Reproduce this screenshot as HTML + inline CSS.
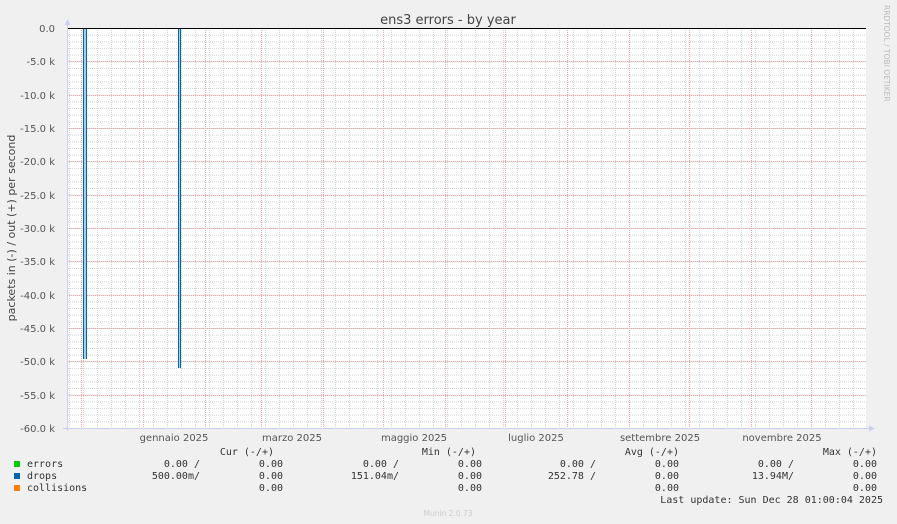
<!DOCTYPE html>
<html><head><meta charset="utf-8"><style>
body{margin:0;background:#f0f0f0;width:897px;height:524px;overflow:hidden;position:relative;font-family:"DejaVu Sans","Liberation Sans",sans-serif}
.m{position:absolute;font-family:"DejaVu Sans Mono","Liberation Mono",monospace;font-size:10px;color:#333;white-space:pre;line-height:12px}
.r{text-align:right}
</style></head><body>
<svg width="897" height="524" style="position:absolute;left:0;top:0" xmlns="http://www.w3.org/2000/svg" shape-rendering="crispEdges">
<defs>
<pattern id="h" x="0" y="28" width="10" height="6.6667" patternUnits="userSpaceOnUse"><rect x="0" y="0" width="1" height="1" fill="#d4d4d4"/><rect x="2" y="0" width="1" height="1" fill="#d4d4d4"/><rect x="4" y="0" width="1" height="1" fill="#d4d4d4"/><rect x="6" y="0" width="1" height="1" fill="#d4d4d4"/><rect x="8" y="0" width="1" height="1" fill="#d4d4d4"/></pattern>
<pattern id="v" x="783" y="0" width="14" height="10" patternUnits="userSpaceOnUse"><rect x="0" y="0" width="1" height="1" fill="#d4d4d4"/><rect x="0" y="2" width="1" height="1" fill="#d4d4d4"/><rect x="0" y="4" width="1" height="1" fill="#d4d4d4"/><rect x="0" y="6" width="1" height="1" fill="#d4d4d4"/><rect x="0" y="8" width="1" height="1" fill="#d4d4d4"/></pattern>
</defs>
<rect x="67" y="28" width="799" height="400" fill="#fff"/>
<rect x="67" y="28" width="799" height="400" fill="url(#h)"/>
<rect x="67" y="28" width="799" height="400" fill="url(#v)"/>
<g stroke="#eaa8a8" stroke-dasharray="1,1">
<line x1="67" y1="61.5" x2="866" y2="61.5"/><line x1="67" y1="95.5" x2="866" y2="95.5"/><line x1="67" y1="128.5" x2="866" y2="128.5"/><line x1="67" y1="161.5" x2="866" y2="161.5"/><line x1="67" y1="195.5" x2="866" y2="195.5"/><line x1="67" y1="228.5" x2="866" y2="228.5"/><line x1="67" y1="261.5" x2="866" y2="261.5"/><line x1="67" y1="295.5" x2="866" y2="295.5"/><line x1="67" y1="328.5" x2="866" y2="328.5"/><line x1="67" y1="361.5" x2="866" y2="361.5"/><line x1="67" y1="395.5" x2="866" y2="395.5"/>
<line x1="81.5" y1="28" x2="81.5" y2="428"/><line x1="143.5" y1="28" x2="143.5" y2="428"/><line x1="205.5" y1="28" x2="205.5" y2="428"/><line x1="261.5" y1="28" x2="261.5" y2="428"/><line x1="323.5" y1="28" x2="323.5" y2="428"/><line x1="383.5" y1="28" x2="383.5" y2="428"/><line x1="445.5" y1="28" x2="445.5" y2="428"/><line x1="505.5" y1="28" x2="505.5" y2="428"/><line x1="567.5" y1="28" x2="567.5" y2="428"/><line x1="629.5" y1="28" x2="629.5" y2="428"/><line x1="689.5" y1="28" x2="689.5" y2="428"/><line x1="751.5" y1="28" x2="751.5" y2="428"/><line x1="811.5" y1="28" x2="811.5" y2="428"/>
</g>
<rect x="83" y="28" width="3" height="331" fill="#a8cbe8"/>
<rect x="83" y="28" width="1" height="331" fill="#0066b3"/>
<rect x="86" y="28" width="1" height="331" fill="#0066b3"/>
<rect x="178" y="28" width="2" height="340" fill="#a8cbe8"/>
<rect x="178" y="28" width="1" height="340" fill="#0066b3"/>
<rect x="180" y="28" width="1" height="340" fill="#0066b3"/>
<line x1="67" y1="28.5" x2="866" y2="28.5" stroke="#000"/>
<line x1="67.5" y1="24" x2="67.5" y2="431" stroke="#ccd0f0"/>
<polygon points="64.5,25 70.5,25 67.5,19" fill="#ccd0f0"/>
<line x1="63" y1="428.5" x2="870" y2="428.5" stroke="#ccd0f0"/>
<polygon points="869,425.5 869,431.5 875,428.5" fill="#ccd0f0"/>
<g font-family="DejaVu Sans,sans-serif" font-size="10" fill="#555" text-anchor="end">
<text x="55" y="32">0.0</text><text x="55" y="65">-5.0 k</text><text x="55" y="99">-10.0 k</text><text x="55" y="132">-15.0 k</text><text x="55" y="165">-20.0 k</text><text x="55" y="199">-25.0 k</text><text x="55" y="232">-30.0 k</text><text x="55" y="265">-35.0 k</text><text x="55" y="299">-40.0 k</text><text x="55" y="332">-45.0 k</text><text x="55" y="365">-50.0 k</text><text x="55" y="399">-55.0 k</text><text x="55" y="432">-60.0 k</text>
</g>
<g font-family="DejaVu Sans,sans-serif" font-size="10" fill="#555" text-anchor="middle">
<text x="174" y="441">gennaio 2025</text><text x="292" y="441">marzo 2025</text><text x="414" y="441">maggio 2025</text><text x="536" y="441">luglio 2025</text><text x="660" y="441">settembre 2025</text><text x="782" y="441">novembre 2025</text>
</g>
<text x="448" y="24" font-family="DejaVu Sans,sans-serif" font-size="13" fill="#444" text-anchor="middle">ens3 errors - by year</text>
<text transform="translate(15,228) rotate(-90)" font-family="DejaVu Sans,sans-serif" font-size="11" fill="#444" text-anchor="middle">packets in (-) / out (+) per second</text>
<text transform="translate(884,5) rotate(90)" font-family="DejaVu Sans,sans-serif" font-size="7.5" fill="#bbb">RRDTOOL / TOBI OETIKER</text>
<text x="448" y="516" font-family="DejaVu Sans,sans-serif" font-size="7.5" fill="#ccc" text-anchor="middle">Munin 2.0.73</text>
<rect x="14" y="461" width="6" height="6" fill="#00cc00"/>
<rect x="14" y="473" width="6" height="6" fill="#0066b3"/>
<rect x="14" y="485" width="6" height="6" fill="#ff8000"/>
</svg>
<div class="m" style="left:27px;top:459px">errors</div>
<div class="m" style="left:27px;top:471px">drops</div>
<div class="m" style="left:27px;top:483px">collisions</div>
<div class="m r" style="right:623px;top:447px">Cur (-/+)</div>
<div class="m r" style="right:421px;top:447px">Min (-/+)</div>
<div class="m r" style="right:218px;top:447px">Avg (-/+)</div>
<div class="m r" style="right:20px;top:447px">Max (-/+)</div>
<div class="m r" style="right:697px;top:459px">0.00 /
500.00m/</div>
<div class="m r" style="right:614px;top:459px">0.00
0.00
0.00</div>
<div class="m r" style="right:498px;top:459px">0.00 /
151.04m/</div>
<div class="m r" style="right:415px;top:459px">0.00
0.00
0.00</div>
<div class="m r" style="right:301px;top:459px">0.00 /
252.78 /</div>
<div class="m r" style="right:218px;top:459px">0.00
0.00
0.00</div>
<div class="m r" style="right:103px;top:459px">0.00 /
13.94M/</div>
<div class="m r" style="right:20px;top:459px">0.00
0.00
0.00</div>
<div class="m r" style="right:14px;top:495px">Last update: Sun Dec 28 01:00:04 2025</div>
</body></html>
